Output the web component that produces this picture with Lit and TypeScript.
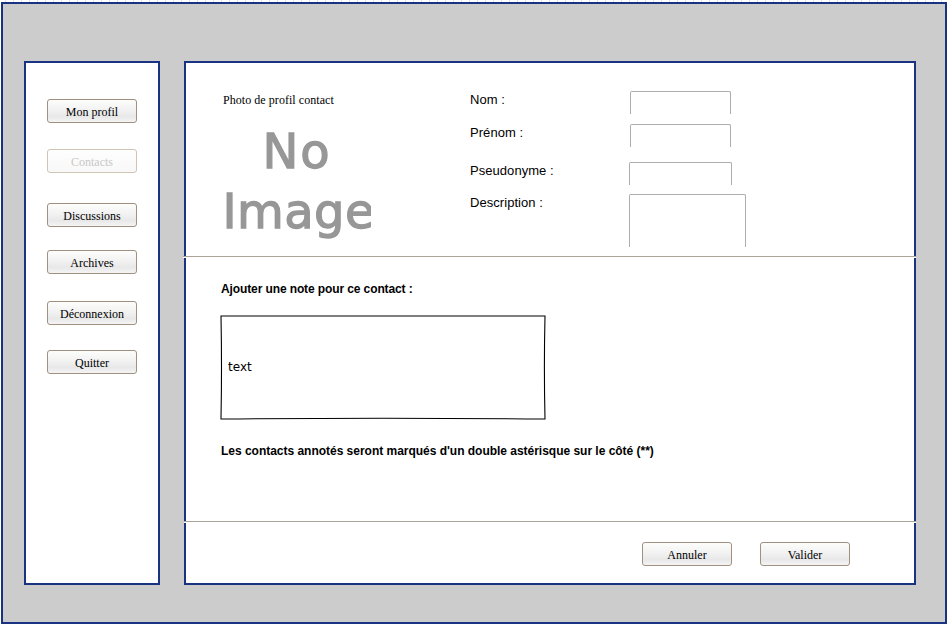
import { LitElement, html, css } from "lit";
import { customElement, property } from "lit/decorators.js";

@customElement("app-button")
class AppButton extends LitElement {
  @property() label = "";
  @property({ type: Boolean }) disabled = false;

  static styles = css`
    :host { display: block; width: 90px; height: 24px; flex: none; }
    .button {
      display: block; width: 90px; height: 24px; box-sizing: border-box; margin: 0;
      padding: 2px 0 0; border: 1px solid #a09080; border-radius: 3px;
      background: linear-gradient(#fdfdfc 0%, #f1f1f1 48%, #e8e8e8 75%, #f4f4f4 100%);
      font: 12px/20px "Liberation Serif", serif;
      color: #000; text-align: center;
    }
    .button:disabled { border-color: #d0c4b4; color: #c8c8c8; background: linear-gradient(#fefefe, #f8f8f8); }
  `;

  render() {
    return html`<button class="button" ?disabled=${this.disabled}>${this.label}</button>`;
  }
}

@customElement("app-root")
class AppRoot extends LitElement {
  static styles = css`
    :host {
      display: block; box-sizing: border-box; width: 947px; height: 624px;
      padding: 2px 0 0 1px; overflow: hidden; color: #000;
      background: repeating-linear-gradient(90deg, #fff 0 5px, #e4e4ee 5px 6px, #fff 6px 8px) 0 0 / 100% 2px no-repeat #fff;
    }
    .frame {
      box-sizing: border-box; width: 946px; height: 622px; border: 2px solid #1a3282;
      background: #ccc; padding: 57px 0 0 21px; display: flex; gap: 24px;
    }
    .side, .main { box-sizing: border-box; height: 524px; border: 2px solid #1a3282; background: #fff; }
    .side { width: 136px; padding: 36px 0 0 21px; }
    .main { width: 732px; display: flex; flex-direction: column; }
    .gap26 { margin-top: 26px; }
    .gap30 { margin-top: 30px; }
    .gap23 { margin-top: 23px; }
    .gap27 { margin-top: 27px; }
    .gap25 { margin-top: 25px; }
    .rule { height: 1px; background: #aaa598; border-bottom: 1px solid #fff; margin: 0 -2px; flex: none; }
    .rule.wide { margin-left: -3px; }

    .profile { height: 193px; display: flex; flex: none; }
    .photo { width: 283px; padding: 30px 0 0 35px; box-sizing: border-box; }
    .caption { font: 12px/14px "Liberation Serif", serif; letter-spacing: 0.05px; padding-left: 2px; white-space: nowrap; }
    .placeholder {
      width: 150px; height: 124px; margin-top: 14px; overflow: hidden;
      font: 48px/60px "DejaVu Sans", sans-serif; color: #979797;
      -webkit-text-stroke: 1.3px #979797; white-space: nowrap;
    }
    .word { display: block; filter: blur(0.7px); letter-spacing: 0.4px; padding-left: 1.5px; }
    .word.first { letter-spacing: 1.8px; padding-left: 41.5px; }
    .fields { padding-top: 28px; font: 13px/18px "Liberation Sans", sans-serif; letter-spacing: 0.05px; }
    .row { display: flex; }
    .label { width: 160px; flex: none; padding-left: 1px; box-sizing: border-box; }
    .input {
      box-sizing: border-box; width: 101px; height: 23px; border: 1px solid #adadad; border-bottom: 0;
      border-radius: 2px 2px 0 0; flex: none;
    }
    .nom { height: 33px; }
    .prenom { height: 38px; }
    .pseudo { height: 32px; }
    .nom .input, .prenom .input { margin-left: 1px; }
    .pseudo .input { width: 103px; }
    .description .input { width: 117px; height: 53px; }

    .note { height: 263px; flex: none; box-sizing: border-box; padding: 23px 0 0 34px; font: bold 12px/16px "Liberation Sans", sans-serif; }
    .heading, .hint { padding-left: 1px; white-space: nowrap; letter-spacing: -0.02px; }
    .heading { letter-spacing: -0.11px; }
    .notebox { position: relative; width: 326px; height: 105px; margin: 18px 0 23px; display: flex; align-items: center; }
    .outline { position: absolute; inset: 0; }
    .notetext { padding: 0 0 2px 8px; font: 12px/14px "Comic Sans MS", "DejaVu Sans", sans-serif; }

    .actions { display: flex; gap: 28px; padding: 19px 0 0 456px; }
  `;

  render() {
    return html`
      <div class="frame">
        <nav class="side">
          <app-button label="Mon profil"></app-button>
          <app-button class="gap26" label="Contacts" disabled></app-button>
          <app-button class="gap30" label="Discussions"></app-button>
          <app-button class="gap23" label="Archives"></app-button>
          <app-button class="gap27" label="Déconnexion"></app-button>
          <app-button class="gap25" label="Quitter"></app-button>
        </nav>
        <main class="main">
          <section class="profile">
            <div class="photo">
              <div class="caption">Photo de profil contact</div>
              <div class="placeholder"><span class="word first">No</span><span class="word">Image</span></div>
            </div>
            <div class="fields">
              <div class="row nom"><span class="label">Nom :</span><span class="input"></span></div>
              <div class="row prenom"><span class="label">Prénom :</span><span class="input"></span></div>
              <div class="row pseudo"><span class="label">Pseudonyme :</span><span class="input"></span></div>
              <div class="row description"><span class="label">Description :</span><span class="input"></span></div>
            </div>
          </section>
          <div class="rule wide"></div>
          <section class="note">
            <div class="heading">Ajouter une note pour ce contact :</div>
            <div class="notebox">
              <svg class="outline" width="326" height="105" viewBox="0 0 326 105" fill="none" stroke="#000" stroke-width="1.1">
                <path d="M1 1H325Q323.8 52 325 104Q163 102.6 1 104Q2 52 1 1Z" />
              </svg>
              <span class="notetext">text</span>
            </div>
            <div class="hint">Les contacts annotés seront marqués d'un double astérisque sur le côté (**)</div>
          </section>
          <div class="rule"></div>
          <section class="actions">
            <app-button label="Annuler"></app-button>
            <app-button label="Valider"></app-button>
          </section>
        </main>
      </div>
    `;
  }
}
